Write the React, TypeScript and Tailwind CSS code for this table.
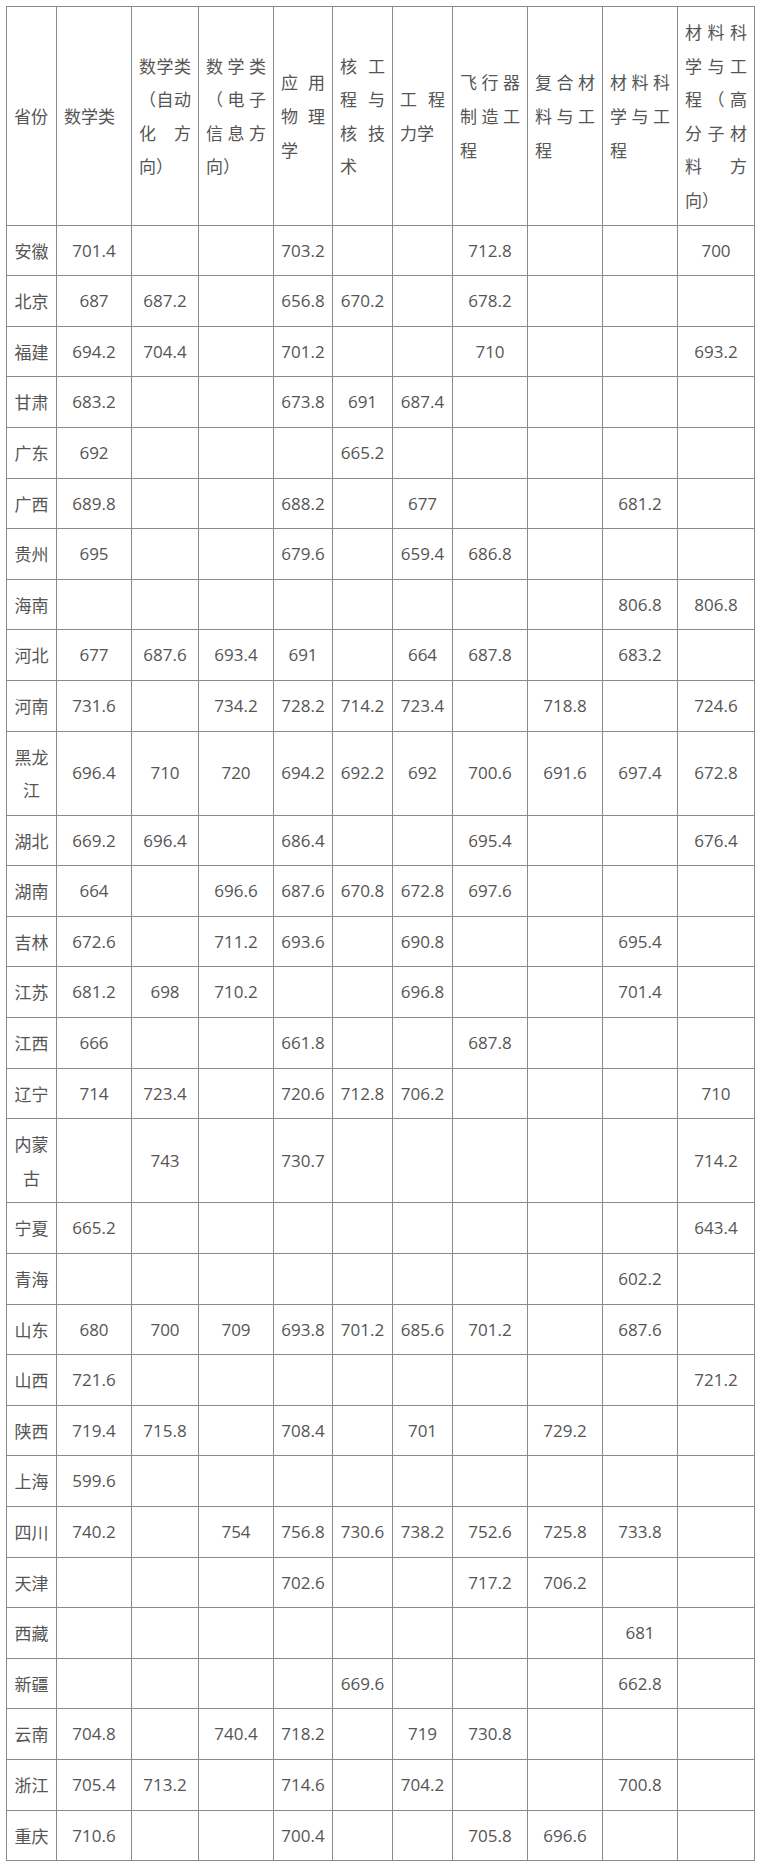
const headers = [
  "省份",
  "数学类",
  "数学类（自动化方向）",
  "数学类（电子信息方向）",
  "应用物理学",
  "核工程与核技术",
  "工程力学",
  "飞行器制造工程",
  "复合材料与工程",
  "材料科学与工程",
  "材料科学与工程（高分子材料方向）",
];

const widths = ["w-[50px]", "w-[75px]", "w-[67px]", "w-[75px]", "w-[59px]", "w-[60px]", "w-[60px]", "w-[75px]", "w-[75px]", "w-[75px]", "w-[77px]"];

const rows: string[][] = [
  ["安徽", "701.4", "", "", "703.2", "", "", "712.8", "", "", "700"],
  ["北京", "687", "687.2", "", "656.8", "670.2", "", "678.2", "", "", ""],
  ["福建", "694.2", "704.4", "", "701.2", "", "", "710", "", "", "693.2"],
  ["甘肃", "683.2", "", "", "673.8", "691", "687.4", "", "", "", ""],
  ["广东", "692", "", "", "", "665.2", "", "", "", "", ""],
  ["广西", "689.8", "", "", "688.2", "", "677", "", "", "681.2", ""],
  ["贵州", "695", "", "", "679.6", "", "659.4", "686.8", "", "", ""],
  ["海南", "", "", "", "", "", "", "", "", "806.8", "806.8"],
  ["河北", "677", "687.6", "693.4", "691", "", "664", "687.8", "", "683.2", ""],
  ["河南", "731.6", "", "734.2", "728.2", "714.2", "723.4", "", "718.8", "", "724.6"],
  ["黑龙江", "696.4", "710", "720", "694.2", "692.2", "692", "700.6", "691.6", "697.4", "672.8"],
  ["湖北", "669.2", "696.4", "", "686.4", "", "", "695.4", "", "", "676.4"],
  ["湖南", "664", "", "696.6", "687.6", "670.8", "672.8", "697.6", "", "", ""],
  ["吉林", "672.6", "", "711.2", "693.6", "", "690.8", "", "", "695.4", ""],
  ["江苏", "681.2", "698", "710.2", "", "", "696.8", "", "", "701.4", ""],
  ["江西", "666", "", "", "661.8", "", "", "687.8", "", "", ""],
  ["辽宁", "714", "723.4", "", "720.6", "712.8", "706.2", "", "", "", "710"],
  ["内蒙古", "", "743", "", "730.7", "", "", "", "", "", "714.2"],
  ["宁夏", "665.2", "", "", "", "", "", "", "", "", "643.4"],
  ["青海", "", "", "", "", "", "", "", "", "602.2", ""],
  ["山东", "680", "700", "709", "693.8", "701.2", "685.6", "701.2", "", "687.6", ""],
  ["山西", "721.6", "", "", "", "", "", "", "", "", "721.2"],
  ["陕西", "719.4", "715.8", "", "708.4", "", "701", "", "729.2", "", ""],
  ["上海", "599.6", "", "", "", "", "", "", "", "", ""],
  ["四川", "740.2", "", "754", "756.8", "730.6", "738.2", "752.6", "725.8", "733.8", ""],
  ["天津", "", "", "", "702.6", "", "", "717.2", "706.2", "", ""],
  ["西藏", "", "", "", "", "", "", "", "", "681", ""],
  ["新疆", "", "", "", "", "669.6", "", "", "", "662.8", ""],
  ["云南", "704.8", "", "740.4", "718.2", "", "719", "730.8", "", "", ""],
  ["浙江", "705.4", "713.2", "", "714.6", "", "704.2", "", "", "700.8", ""],
  ["重庆", "710.6", "", "", "700.4", "", "", "705.8", "696.6", "", ""],
];

// CJK cells use the CJK font only, numbers use Open Sans, so each line box stays 33.6px
const cjk = "font-['Noto_Sans_CJK_SC',sans-serif]";
const num = "font-['Open_Sans',sans-serif]";

export default function App() {
  return (
    <div className="min-h-[1871px] bg-white pl-[6px] pt-[6px] text-[#555]">
      <table className="table-fixed w-[749px] border-collapse border border-[#8a8a8a] text-[17px] leading-[33.6px] [text-spacing-trim:space-all]">
        <colgroup>
          {widths.map((w, i) => (
            <col key={i} className={w} />
          ))}
        </colgroup>
        <thead>
          <tr>
            {headers.map((h, i) => (
              <th
                key={i}
                className={`${cjk} border border-[#8a8a8a] px-[7px] py-2 text-justify font-normal align-middle`}
              >
                {h}
              </th>
            ))}
          </tr>
        </thead>
        <tbody>
          {rows.map((r, ri) => (
            <tr key={ri}>
              {r.map((c, ci) => (
                <td
                  key={ci}
                  className={`${ci === 0 ? cjk : num} border border-[#8a8a8a] px-[7px] py-2 text-center align-middle`}
                >
                  {c}
                </td>
              ))}
            </tr>
          ))}
        </tbody>
      </table>
    </div>
  );
}
